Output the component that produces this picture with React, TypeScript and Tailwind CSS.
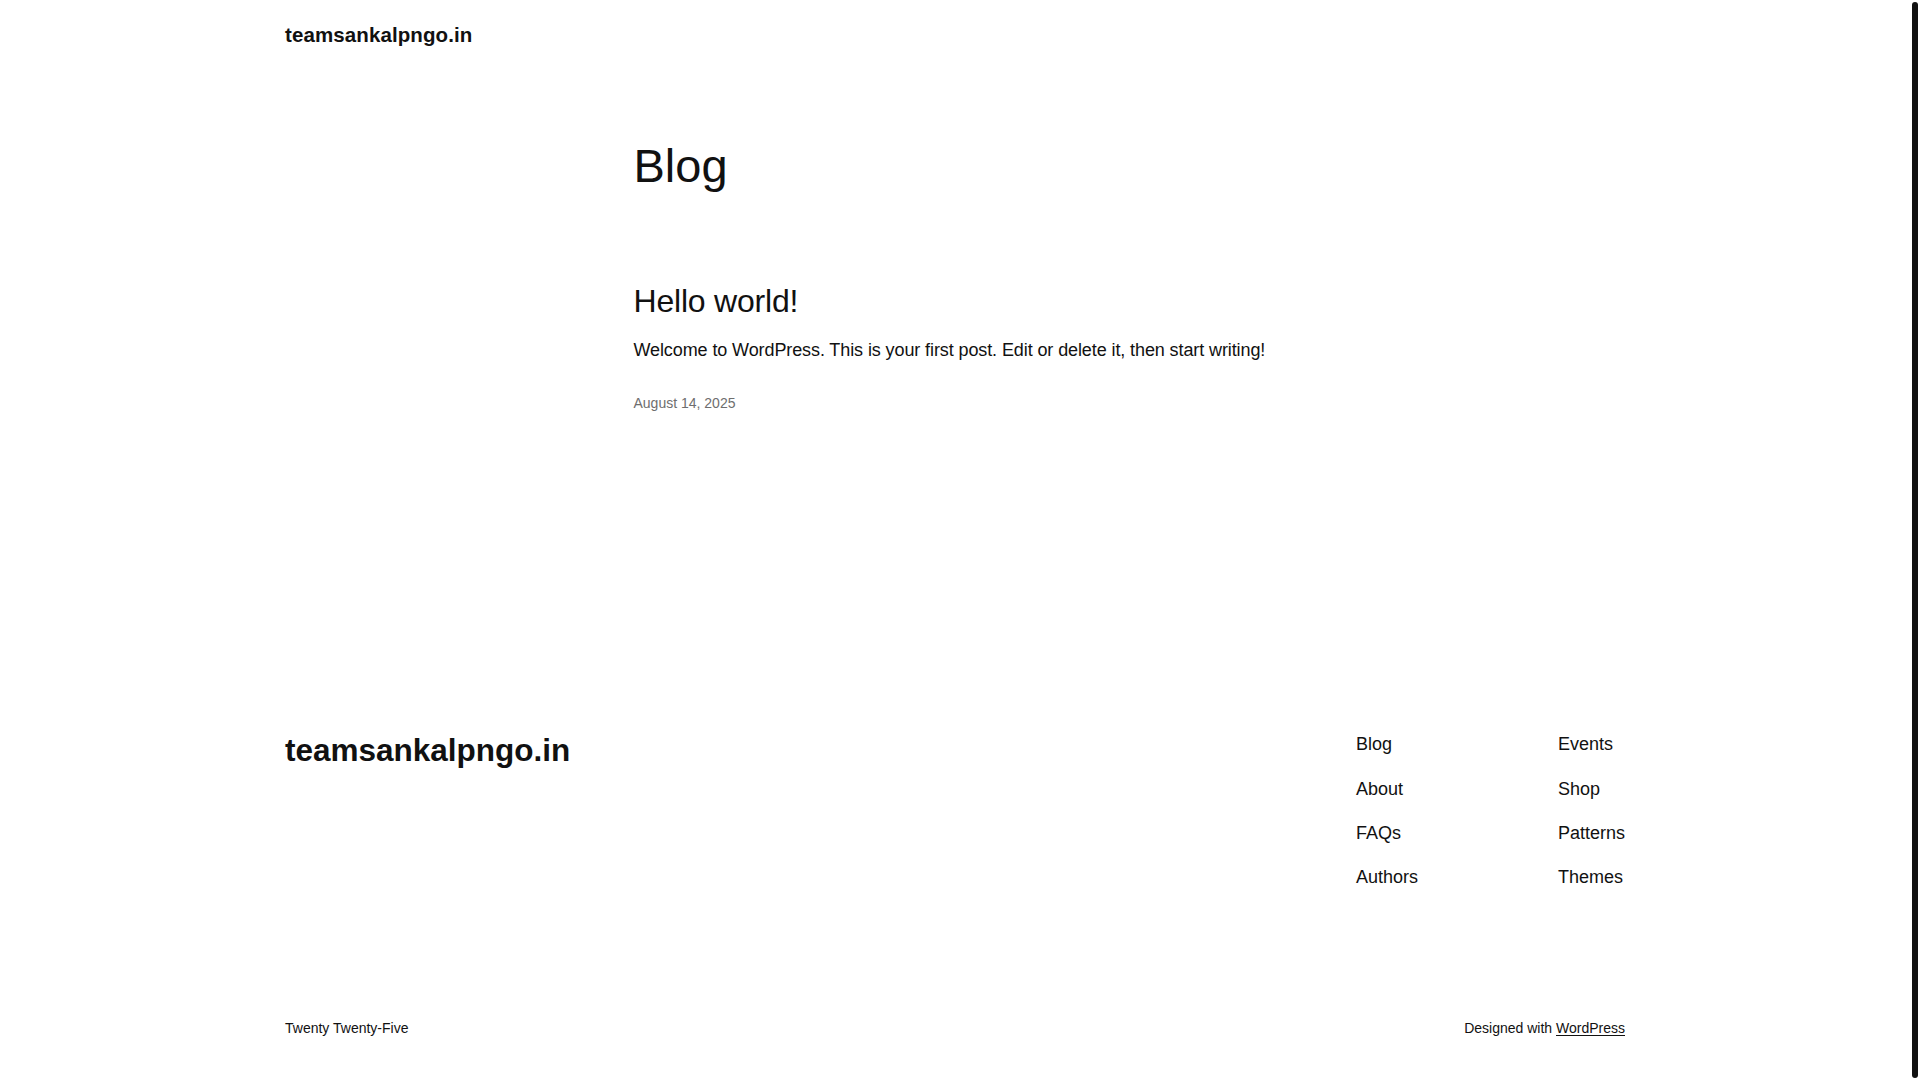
const sans = { fontFamily: '"Liberation Sans", Arial, sans-serif' };

const navLeft = ["Blog", "About", "FAQs", "Authors"];
const navRight = ["Events", "Shop", "Patterns", "Themes"];

function NavColumn({ items }: { items: string[] }) {
  return (
    <ul className="flex flex-col gap-[17.3px]">
      {items.map((item) => (
        <li key={item}>
          <a href="#" className="text-[18px] leading-[27px] text-[#111111]">
            {item}
          </a>
        </li>
      ))}
    </ul>
  );
}

export default function App() {
  return (
    <div className="flex h-screen w-full overflow-hidden bg-white text-[#111111]" style={sans}>
      <div className="flex-1 overflow-hidden pl-[5px]">
        <div className="mx-auto w-[1340px]">
          {/* Header */}
          <header className="pt-[21px]">
            <a href="#" className="block text-[20.5px] font-bold leading-[28px] tracking-[0.1px]">
              teamsankalpngo.in
            </a>
          </header>

          {/* Main */}
          <main className="mx-auto w-[643px]">
            <h1 className="mt-[90px] text-[47px] leading-[54px]">Blog</h1>

            <article>
              <h2 className="mt-[88px] text-[32px] leading-[40px] tracking-[-0.2px]">
                <a href="#">Hello world!</a>
              </h2>
              <p className="mt-[16px] text-[18px] leading-[27px] tracking-[-0.1px]">
                Welcome to WordPress. This is your first post. Edit or delete it, then start writing!
              </p>
              <p className="mt-[29px] text-[14px] leading-[20px] text-[#6e6e6e]">August 14, 2025</p>
            </article>
          </main>

          {/* Footer */}
          <footer className="mt-[316px]">
            <div className="flex items-start justify-between">
              <a href="#" className="mt-[1px] text-[31.5px] font-bold leading-[40px]">
                teamsankalpngo.in
              </a>
              <nav className="mt-[2.3px] flex gap-[140px]">
                <NavColumn items={navLeft} />
                <NavColumn items={navRight} />
              </nav>
            </div>

            <div className="mt-[127px] flex items-center justify-between text-[14px] leading-[20px]">
              <p>Twenty Twenty-Five</p>
              <p>
                Designed with{" "}
                <a href="#" className="underline underline-offset-2">
                  WordPress
                </a>
              </p>
            </div>
          </footer>
        </div>
      </div>

      {/* scrollbar */}
      <aside className="flex w-[15px] shrink-0 flex-col bg-white py-[2px] pl-[7px]">
        <div className="w-[6px] flex-1 rounded-full bg-[#111111]" />
      </aside>
    </div>
  );
}
